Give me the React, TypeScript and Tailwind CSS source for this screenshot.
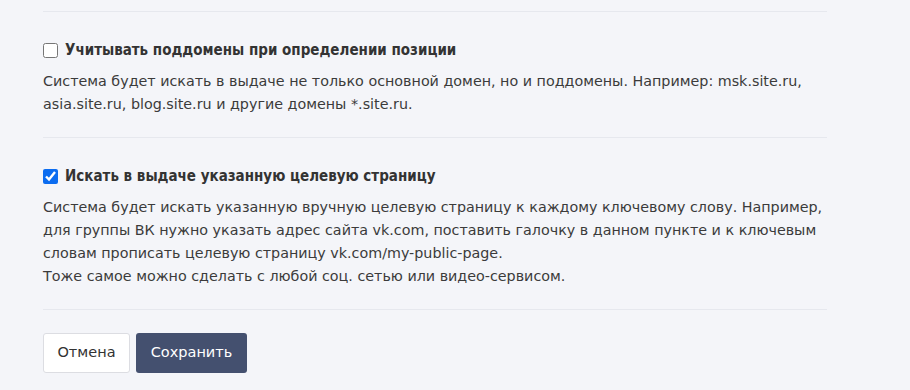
import { useState } from 'react';

function Option({
  title,
  checked,
  onChange,
  children,
}: {
  title: string;
  checked: boolean;
  onChange: (v: boolean) => void;
  children: React.ReactNode;
}) {
  return (
    <div className="border-b border-[#e6e8ee] pt-[27px] pb-[21px]">
      <label
        className="flex items-center gap-[7px] text-[15px] font-bold leading-[22px] text-[#333]"
        style={{ fontFamily: '"DejaVu Sans Condensed", "DejaVu Sans", sans-serif' }}
      >
        <input
          type="checkbox"
          checked={checked}
          onChange={(e) => onChange(e.target.checked)}
          className="m-0 h-[15px] w-[15px] accent-[#0b6cf0]"
        />
        {title}
      </label>
      <p className="mt-[9px] whitespace-nowrap text-[14.3px] leading-[23px] text-[#3b3b3b]">{children}</p>
    </div>
  );
}

export default function App() {
  const [subdomains, setSubdomains] = useState(false);
  const [target, setTarget] = useState(true);

  return (
    <div
      className="min-h-[390px] bg-[#f4f5f9] pl-[43px]"
      style={{ fontFamily: '"DejaVu Sans", Tahoma, sans-serif' }}
    >
      <div className="w-[784px]">
        <div className="h-[12px] border-b border-[#e6e8ee]" />
        <Option title="Учитывать поддомены при определении позиции" checked={subdomains} onChange={setSubdomains}>
          Система будет искать в выдаче не только основной домен, но и поддомены. Например: msk.site.ru,
          <br />
          asia.site.ru, blog.site.ru и другие домены *.site.ru.
        </Option>
        <Option title="Искать в выдаче указанную целевую страницу" checked={target} onChange={setTarget}>
          Система будет искать указанную вручную целевую страницу к каждому ключевому слову. Например,
          <br />
          для группы ВК нужно указать адрес сайта vk.com, поставить галочку в данном пункте и к ключевым
          <br />
          словам прописать целевую страницу vk.com/my-public-page.
          <br />
          Тоже самое можно сделать с любой соц. сетью или видео-сервисом.
        </Option>
        <div className="flex gap-[6px] pt-[23px]">
          <button className="h-[40px] w-[87px] rounded-[3px] border border-[#dcdde2] bg-white text-[14.5px] text-[#333]">
            Отмена
          </button>
          <button className="h-[40px] w-[111px] rounded-[3px] bg-[#44506f] text-[14.5px] text-white">
            Сохранить
          </button>
        </div>
      </div>
    </div>
  );
}
